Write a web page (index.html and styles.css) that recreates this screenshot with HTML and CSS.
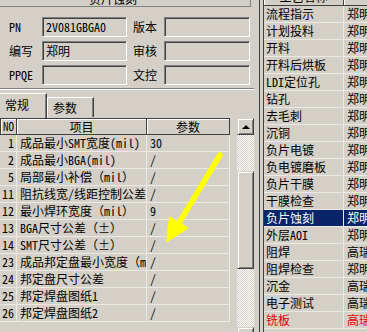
FILE: index.html
```html
<!DOCTYPE html>
<html lang="zh-CN">
<head>
  <meta charset="UTF-8" />
  <title>负片蚀刻</title>
  <link rel="stylesheet" href="styles.css">
</head>
<body>
  <div class="app">
    <div class="left">
      <div class="caption"><span>负片蚀刻</span></div>

      <div class="fields">
        <label>PN</label><div class="edit">2V081GBGA0</div>
        <label class="lbl2">版本</label><div class="edit"></div>
        <label>编写</label><div class="edit">郑明</div>
        <label class="lbl2">审核</label><div class="edit"></div>
        <label>PPQE</label><div class="edit"></div>
        <label class="lbl2">文控</label><div class="edit"></div>
      </div>

      <div class="sep"></div>

      <div class="tabs">
        <div class="tab active">常规</div>
        <div class="tab">参数</div>
      </div>

      <div class="grid-area">
        <div class="grid">
          <div class="row head">
            <div class="cell">NO</div>
            <div class="cell">项目</div>
            <div class="cell">参数</div>
          </div>
          <div class="row"><div class="cell no">1</div><div class="cell">成品最小SMT宽度(mil)</div><div class="cell">30</div></div>
          <div class="row"><div class="cell no">2</div><div class="cell">成品最小BGA(mil)</div><div class="cell">/</div></div>
          <div class="row"><div class="cell no">5</div><div class="cell">局部最小补偿（mil）</div><div class="cell">/</div></div>
          <div class="row"><div class="cell no">11</div><div class="cell">阻抗线宽/线距控制公差</div><div class="cell">/</div></div>
          <div class="row"><div class="cell no">12</div><div class="cell">最小焊环宽度（mil）</div><div class="cell">9</div></div>
          <div class="row"><div class="cell no">13</div><div class="cell">BGA尺寸公差（±）</div><div class="cell">/</div></div>
          <div class="row"><div class="cell no">14</div><div class="cell">SMT尺寸公差（±）</div><div class="cell">/</div></div>
          <div class="row"><div class="cell no">23</div><div class="cell">成品邦定盘最小宽度（m</div><div class="cell">/</div></div>
          <div class="row"><div class="cell no">24</div><div class="cell">邦定盘尺寸公差</div><div class="cell">/</div></div>
          <div class="row"><div class="cell no">25</div><div class="cell">邦定焊盘图纸1</div><div class="cell">/</div></div>
          <div class="row"><div class="cell no">26</div><div class="cell">邦定焊盘图纸2</div><div class="cell">/</div></div>
        </div>

        <div class="vscroll">
          <div class="sbtn"><span class="tri up"></span></div>
          <div class="track t1"></div>
          <div class="thumb"></div>
          <div class="track t2"></div>
          <div class="sbtn"><span class="tri down"></span></div>
        </div>
      </div>
    </div>

    <div class="splitter"></div>

    <div class="right">
      <div class="prow head"><div class="pc">工艺名称</div><div class="pc">流程</div></div>
      <div class="prow"><div class="pc">流程指示</div><div class="pc">郑明</div></div>
      <div class="prow"><div class="pc">计划投料</div><div class="pc">郑明</div></div>
      <div class="prow"><div class="pc">开料</div><div class="pc">郑明</div></div>
      <div class="prow"><div class="pc">开料后烘板</div><div class="pc">郑明</div></div>
      <div class="prow"><div class="pc">LDI定位孔</div><div class="pc">郑明</div></div>
      <div class="prow"><div class="pc">钻孔</div><div class="pc">郑明</div></div>
      <div class="prow"><div class="pc">去毛刺</div><div class="pc">郑明</div></div>
      <div class="prow"><div class="pc">沉铜</div><div class="pc">郑明</div></div>
      <div class="prow"><div class="pc">负片电镀</div><div class="pc">郑明</div></div>
      <div class="prow"><div class="pc">负电镀磨板</div><div class="pc">郑明</div></div>
      <div class="prow"><div class="pc">负片干膜</div><div class="pc">郑明</div></div>
      <div class="prow"><div class="pc">干膜检查</div><div class="pc">郑明</div></div>
      <div class="prow selected"><div class="pc">负片蚀刻</div><div class="pc">郑明</div></div>
      <div class="prow"><div class="pc">外层AOI</div><div class="pc">郑明</div></div>
      <div class="prow"><div class="pc">阻焊</div><div class="pc">高瑞</div></div>
      <div class="prow"><div class="pc">阻焊检查</div><div class="pc">郑明</div></div>
      <div class="prow"><div class="pc">沉金</div><div class="pc">高瑞</div></div>
      <div class="prow"><div class="pc">电子测试</div><div class="pc">高瑞</div></div>
      <div class="prow red"><div class="pc">铣板</div><div class="pc">高瑞</div></div>
    </div>
  </div>

  <!-- yellow annotation arrow drawn over the grid -->
  <svg class="arrow" width="367" height="332" viewBox="0 0 367 332">
    <line x1="220" y1="155" x2="179" y2="223" stroke="#ffff00" stroke-width="5.5" stroke-linecap="round"/>
    <polygon points="169,216 189,228 166,243" fill="#ffff00"/>
  </svg>
</body>
</html>
```

FILE: styles.css
```css
* {
  box-sizing: border-box;
}

body {
  margin: 0;
  width: 367px;
  height: 332px;
  overflow: hidden;
  background: #d4d0c8;
  font-family: "Noto Sans Mono CJK SC", "Noto Sans CJK SC", sans-serif;
  font-size: 12px;
  line-height: 16px;
  color: #000;
  position: relative;
}

.app {
  display: flex;
  height: 332px;
}

.left {
  width: 254px;
  flex: none;
  display: flex;
  flex-direction: column;
}

.caption {
  width: 251px;
  height: 7px;
  overflow: hidden;
  text-align: center;
  padding-right: 24px;
  border-right: 1px solid #808080;
  border-bottom: 1px solid #808080;
}

.caption span {
  display: block;
  margin-top: -9px;
}

.fields {
  margin-top: 10px;
  display: grid;
  grid-template-columns: 42px 85px 37px 86px;
  grid-auto-rows: 20px;
  row-gap: 4px;
}

.fields label {
  padding-left: 9px;
  line-height: 20px;
}

.fields .lbl2 {
  padding-left: 6px;
}

.edit {
  border: 1px solid;
  border-color: #808080 #fff #fff #808080;
  box-shadow: inset 1px 1px #404040, inset -1px -1px #d4d0c8;
  padding: 1px 0 0 3px;
  line-height: 16px;
}

.sep {
  margin-top: 3px;
  height: 2px;
  border-top: 1px solid #808080;
  border-bottom: 1px solid #fff;
}

.tabs {
  display: flex;
  height: 28px;
  align-items: flex-end;
}

.tab {
  width: 47px;
  height: 20px;
  padding-left: 5px;
  line-height: 19px;
  border-top: 1px solid #fff;
  border-left: 1px solid #fff;
  border-right: 1px solid #404040;
  box-shadow: inset -1px 0 #808080;
  margin-bottom: 1px;
}

.tab.active {
  width: 47px;
  height: 25px;
  margin-bottom: 0;
  border-left: none;
  line-height: 17px;
  padding-top: 2px;
}

.grid-area {
  flex: 1;
  display: flex;
  overflow: hidden;
}

.grid {
  width: 237px;
}

.row {
  display: grid;
  grid-template-columns: 17px 130px 83px;
  height: 17px;
  width: 230px;
  border-bottom: 1px solid #ebe9e4;
}

.row .cell {
  white-space: nowrap;
  overflow: hidden;
  padding-left: 3px;
  border-right: 1px solid #ebe9e4;
}

.row .cell.no {
  padding: 0 2px 0 0;
  text-align: right;
}

.row.head {
  border-bottom: none;
  border-top: 1px solid #404040;
}

.row.head .cell {
  height: 16px;
  padding: 0;
  text-align: center;
  line-height: 15px;
  border-right: 1px solid #404040;
  border-bottom: 1px solid #404040;
  box-shadow: inset 1px 1px #fff;
}

.row.head .cell:first-child {
  border-left: 1px solid #404040;
  font-size: 11px;
}

.vscroll {
  width: 17px;
  flex: none;
  display: flex;
  flex-direction: column;
}

.sbtn,
.thumb {
  flex: none;
  border: 1px solid;
  border-color: #d4d0c8 #404040 #404040 #d4d0c8;
  box-shadow: inset 1px 1px #fff, inset -1px -1px #808080;
  background: #d4d0c8;
}

.sbtn {
  height: 17px;
  display: flex;
  align-items: center;
  justify-content: center;
}

.tri {
  width: 0;
  height: 0;
  border-left: 4px solid transparent;
  border-right: 4px solid transparent;
}

.tri.up {
  border-bottom: 4px solid #000;
}

.tri.down {
  border-top: 4px solid #000;
}

.track {
  flex: none;
  background: repeating-conic-gradient(#fff 0 25%, #d4d0c8 0 50%) 0 0 / 2px 2px;
}

.t1 {
  height: 36px;
}

.thumb {
  height: 98px;
}

.t2 {
  height: 58px;
}

.splitter {
  width: 9px;
  flex: none;
  display: flex;
  justify-content: center;
}

.splitter::before {
  content: "";
  width: 1px;
  background: #404040;
  margin-left: 1px;
}

.right {
  flex: 1;
  overflow: hidden;
  border-left: 1px solid #404040;
}

.prow {
  display: grid;
  grid-template-columns: 80px 80px;
  height: 17px;
  border-bottom: 1px solid #ebe9e4;
}

.pc {
  white-space: nowrap;
  overflow: hidden;
  padding-left: 2px;
  border-right: 1px solid #ebe9e4;
}

.pc:last-child {
  padding-left: 3px;
}

.prow.head {
  margin-top: -11px;
  border-bottom: 1px solid #404040;
}

.prow.head .pc {
  text-align: center;
  padding: 0;
  border-right: 1px solid #404040;
  box-shadow: inset 1px 1px #fff;
}

.prow.selected {
  background: #0a246a;
  color: #fff;
}

.prow.red {
  color: #e00000;
}

.arrow {
  position: absolute;
  left: 0;
  top: 0;
  pointer-events: none;
}
```
